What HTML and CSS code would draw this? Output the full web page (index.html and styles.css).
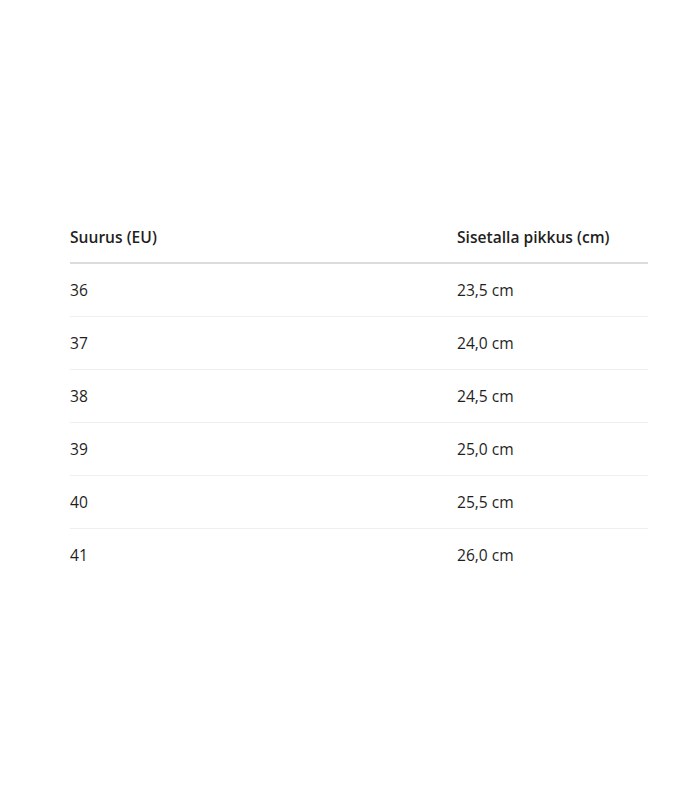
FILE: index.html
```html
<!DOCTYPE html>
<html lang="fi">
<head>
<meta charset="utf-8">
<title>Kokotaulukko</title>
<link rel="stylesheet" href="styles.css">
</head>
<body>
<main class="page">
  <table class="size-table">
    <thead>
      <tr><th class="col-size">Suurus (EU)</th><th>Sisetalla pikkus (cm)</th></tr>
    </thead>
    <tbody>
      <tr><td>36</td><td>23,5 cm</td></tr>
      <tr><td>37</td><td>24,0 cm</td></tr>
      <tr><td>38</td><td>24,5 cm</td></tr>
      <tr><td>39</td><td>25,0 cm</td></tr>
      <tr><td>40</td><td>25,5 cm</td></tr>
      <tr><td>41</td><td>26,0 cm</td></tr>
    </tbody>
  </table>
</main>
</body>
</html>
```
FILE: styles.css
```css
html, body {
  margin: 0;
  padding: 0;
  background: #fff;
}
body {
  font-family: "Open Sans", "Noto Sans", sans-serif;
  color: #1f1f1f;
  font-size: 15.6px;
}
.page {
  min-height: 800px;
  box-sizing: border-box;
  padding: 212px 52px 0 70px;
}
.size-table {
  width: 100%;
  border-collapse: collapse;
}
.size-table th,
.size-table td {
  text-align: left;
  padding: 0;
  height: 52px;
  vertical-align: middle;
}
.size-table th {
  font-weight: 600;
  border-bottom: 2px solid #dcdcdc;
  height: 50px;
}
.size-table td {
  font-weight: 400;
  border-bottom: 1px solid #efefef;
}
.size-table tbody tr:last-child td {
  border-bottom: none;
}
.col-size {
  width: 387px;
}
```
